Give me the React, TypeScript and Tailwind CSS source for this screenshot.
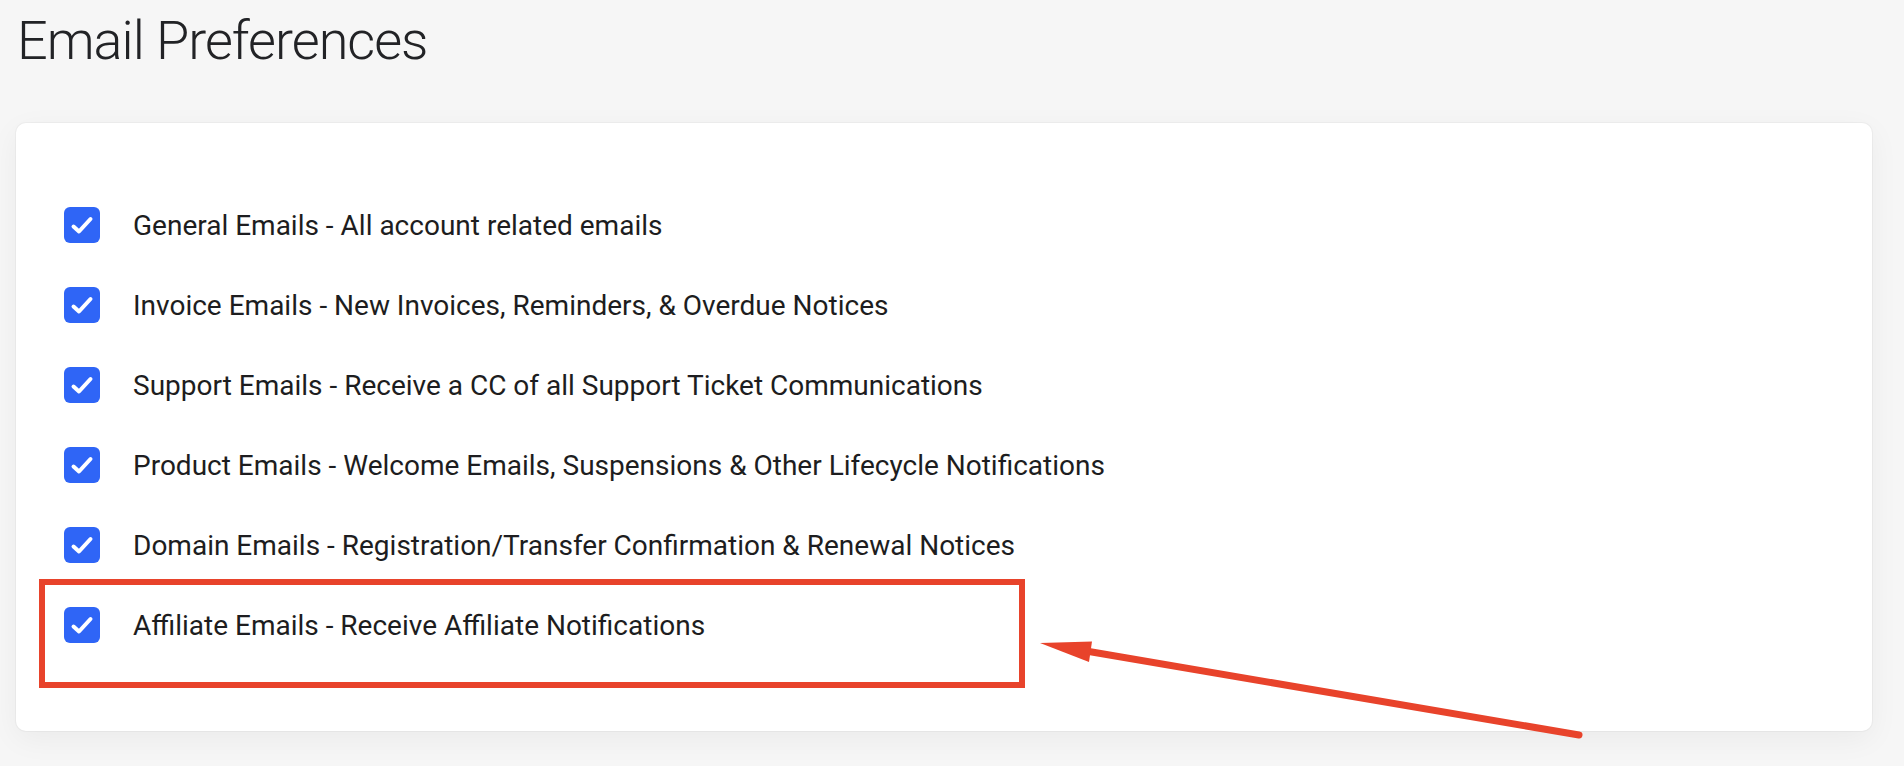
import React from "react";

const items = [
  "General Emails - All account related emails",
  "Invoice Emails - New Invoices, Reminders, & Overdue Notices",
  "Support Emails - Receive a CC of all Support Ticket Communications",
  "Product Emails - Welcome Emails, Suspensions & Other Lifecycle Notifications",
  "Domain Emails - Registration/Transfer Confirmation & Renewal Notices",
  "Affiliate Emails - Receive Affiliate Notifications",
];

function Check() {
  return (
    <div className="w-[36px] h-[36px] rounded-[6px] bg-[#2f65f6] flex-none flex items-center justify-center">
      <svg width="36" height="36" viewBox="0 0 36 36">
        <path d="M9.5 19.5 L15 24.5 L26.5 12" fill="none" stroke="#fff" strokeWidth="4" strokeLinecap="round" strokeLinejoin="round" />
      </svg>
    </div>
  );
}

export default function App() {
  return (
    <div className="relative min-h-[766px] bg-[#f6f6f6] font-['Roboto',sans-serif] overflow-hidden">
      <h1 className="pl-[17px] pt-[8px] text-[54px] leading-[66px] font-light tracking-[-1px] text-[#222326]">Email Preferences</h1>
      <div className="mt-[49px] ml-[16px] w-[1856px] h-[608px] rounded-[10px] bg-white shadow-[0_0_0_1px_rgba(0,0,0,0.03),0_8px_30px_rgba(0,0,0,0.05)] pt-[84px] pl-[48px] flex flex-col gap-[44px]">
        {items.map((t) => (
          <div key={t} className="flex items-start h-[36px]">
            <Check />
            <span className="ml-[33px] mt-[1px] text-[28px] leading-[36px] text-[#1d1d20] whitespace-nowrap">{t}</span>
          </div>
        ))}
      </div>
      <div className="absolute left-[39px] top-[579px] w-[986px] h-[109px] border-[6px] border-[#e8432b]" />
      <svg className="absolute left-0 top-0 pointer-events-none" width="1904" height="766" viewBox="0 0 1904 766">
        <line x1="1086" y1="651" x2="1579" y2="735" stroke="#e8432b" strokeWidth="7" strokeLinecap="round" />
        <polygon points="1040,643 1092,641.5 1089,662" fill="#e8432b" />
      </svg>
    </div>
  );
}
